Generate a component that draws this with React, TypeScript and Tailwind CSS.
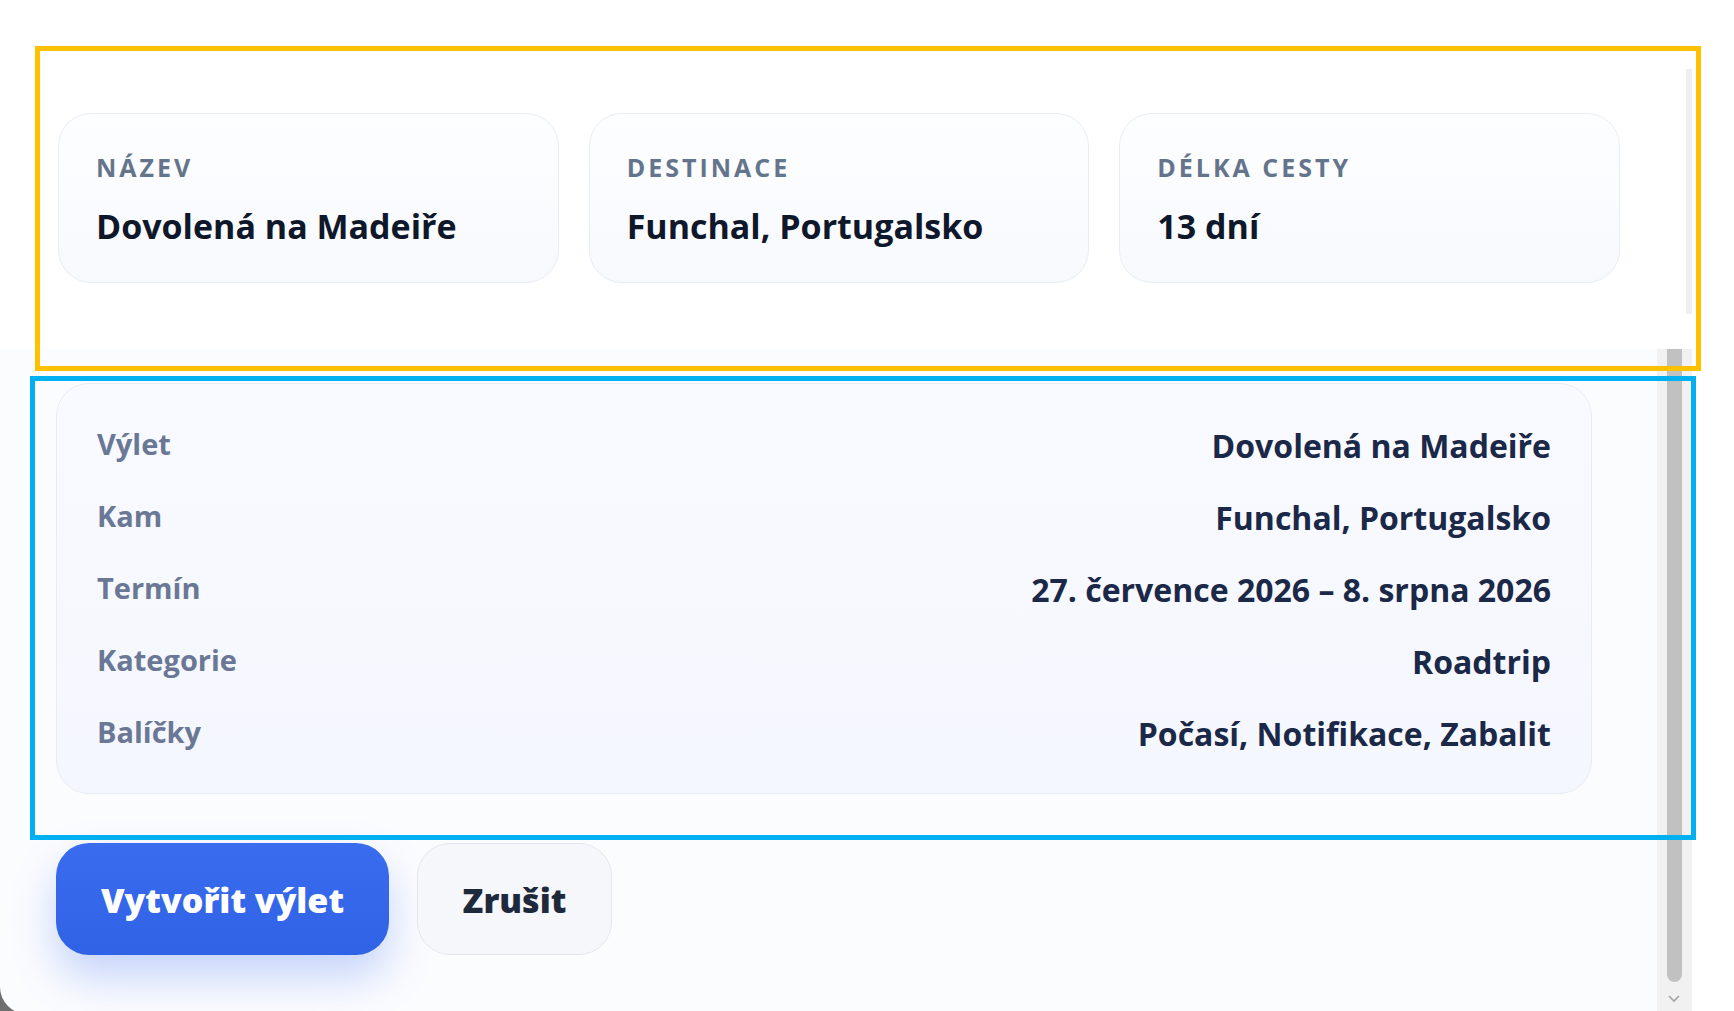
import React from "react";

const facts = [
  { label: "Název", value: "Dovolená na Madeiře" },
  { label: "Destinace", value: "Funchal, Portugalsko" },
  { label: "Délka cesty", value: "13 dní" },
];

const summary = [
  { label: "Výlet", value: "Dovolená na Madeiře" },
  { label: "Kam", value: "Funchal, Portugalsko" },
  { label: "Termín", value: "27. července 2026 – 8. srpna 2026" },
  { label: "Kategorie", value: "Roadtrip" },
  { label: "Balíčky", value: "Počasí, Notifikace, Zabalit" },
];

function FactCard({ label, value }: { label: string; value: string }) {
  return (
    <div className="h-[170px] rounded-[33px] border border-[#e8edf6] bg-gradient-to-b from-[#fdfeff] to-[#f7f9fd] px-[37px] pt-[38px]">
      <p className="text-[25px] font-bold uppercase leading-[30px] tracking-[0.12em] text-[#64748b]">
        {label}
      </p>
      <p className="mt-[22px] text-[34px] font-bold leading-[44px] text-[#0f172a]">
        {value}
      </p>
    </div>
  );
}

export default function App() {
  return (
    <div
      className="relative h-[1011px] w-[1734px] overflow-hidden bg-white"
      style={{ fontFamily: '"Open Sans", "Noto Sans", sans-serif' }}
    >
      {/* top summary strip */}
      <section className="flex h-[349px] bg-white">
        <div className="flex-1 pl-[58px] pt-[113px]">
          <div className="grid w-[1562px] grid-cols-3 gap-[30px]">
            {facts.map((f) => (
              <FactCard key={f.label} label={f.label} value={f.value} />
            ))}
          </div>
        </div>
        <div className="mt-[69px] h-[245px] w-[6px] bg-[#efefef]" />
        <div className="w-[42px]" />
      </section>

      {/* review panel */}
      <section className="h-[665px] bg-[#6f6f6f]">
        <div className="flex h-full overflow-hidden rounded-bl-[27px] bg-[#fbfcfe]">
          <div className="flex-1 pl-[56px] pt-[34px]">
            <div className="w-[1536px] rounded-[33px] border border-[#e6ecf5] bg-gradient-to-b from-[#f8faff] to-[#f4f7fd] px-[40px] pb-[25px] pt-[24px]">
              {summary.map((row) => (
                <div key={row.label} className="flex h-[72px] items-center justify-between">
                  <span className="text-[29px] font-bold text-[#6a7896]">{row.label}</span>
                  <span className="pt-[4px] text-[32px] font-bold text-[#1b2847]">{row.value}</span>
                </div>
              ))}
            </div>

            <div className="mt-[49px] flex gap-[28px]">
              <button className="h-[112px] w-[333px] rounded-[33px] bg-gradient-to-b from-[#3a6cf0] to-[#2f62e4] pt-[3px] text-[34px] font-extrabold text-white shadow-[0_22px_44px_rgba(59,108,240,0.28)]">
                Vytvořit výlet
              </button>
              <button className="h-[112px] w-[195px] rounded-[33px] border border-[#e2e8f0] bg-[#f5f7fb] pt-[3px] text-[34px] font-extrabold text-[#1e293b]">
                Zrušit
              </button>
            </div>
          </div>

          {/* scrollbar */}
          <div className="flex w-[35px] flex-col bg-[#f1f1f1] pl-[10px]">
            <div className="h-[633px] w-[15px] rounded-b-full bg-[#c1c1c1]" />
            <svg width="14" height="10" viewBox="0 0 14 10" className="mt-[12px]">
              <path d="M2 2 L7 7 L12 2" fill="none" stroke="#a3a3a3" strokeWidth="1.6" />
            </svg>
          </div>
          <div className="w-[42px] bg-white" />
        </div>
      </section>

      {/* annotation outlines */}
      <div className="pointer-events-none absolute left-[35px] top-[46px] h-[325px] w-[1666px] border-[5px] border-[#ffc000]" />
      <div className="pointer-events-none absolute left-[30px] top-[376px] h-[464px] w-[1666px] border-[5px] border-[#00b0f0]" />
    </div>
  );
}
